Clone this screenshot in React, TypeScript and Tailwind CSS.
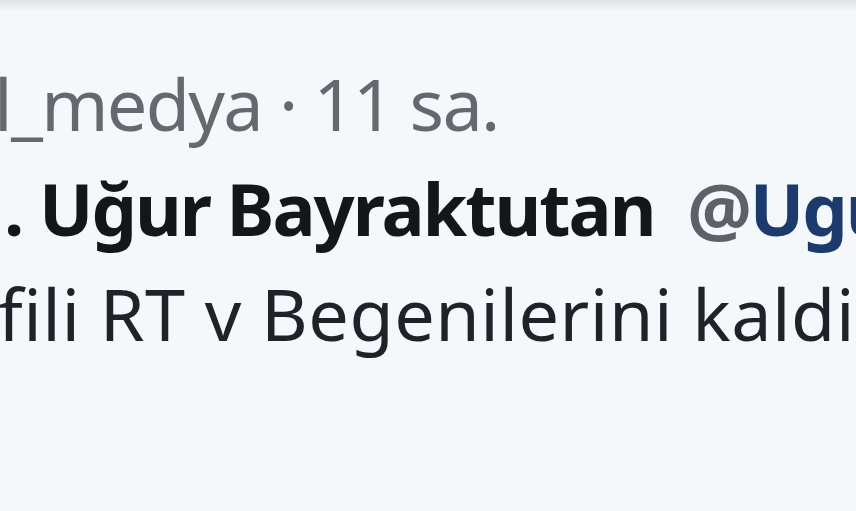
export default function App() {
  return (
    <div className="relative h-[511px] w-full overflow-hidden bg-[#f5f8fa] font-['Noto_Sans','Liberation_Sans',sans-serif]">
      <div className="h-[12px] w-full bg-gradient-to-b from-[#dfe3e7] to-[#f5f8fa]" />
      <div className="flex flex-col pt-[39px] text-[72px] leading-[105px] whitespace-nowrap">
        <div className="ml-[-6px] tracking-[-1.7px] text-[#64696f]">l_medya · 11 sa.</div>
        <div className="ml-[4px] font-bold tracking-[-2px] text-[#14171a]">
          . Uğur Bayraktutan <span className="ml-[16px] text-[#5c6268]">@</span>
          <span className="text-[#1c3a6e]">UgurBayraktutan</span>
        </div>
        <div className="ml-[-2px] tracking-[0.5px] text-[#1d2329]">fili RT v Begenilerini kaldirsa</div>
      </div>
    </div>
  );
}
